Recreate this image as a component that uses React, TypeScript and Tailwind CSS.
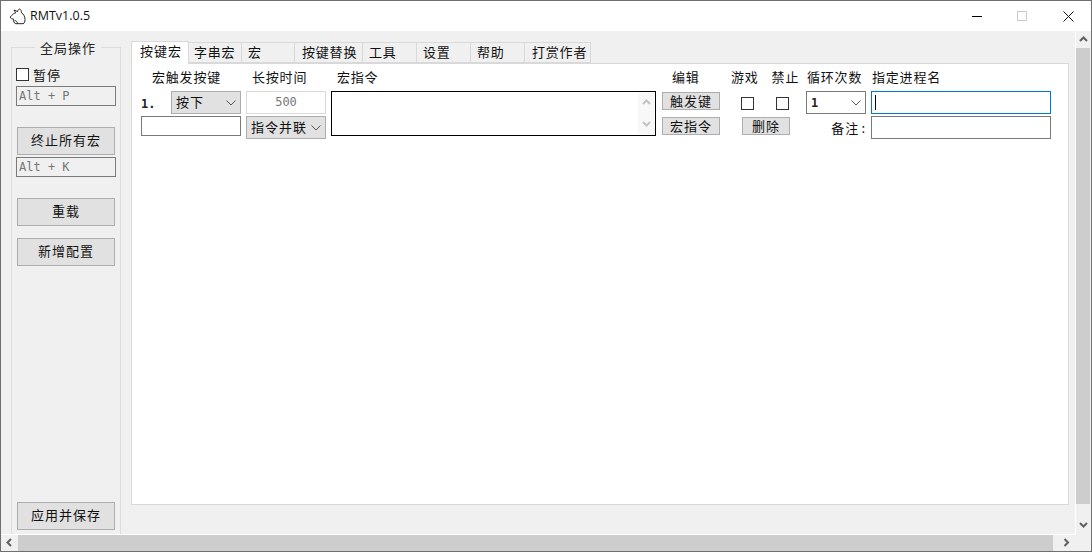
import type { ReactNode } from "react"

const tabs = [
  { label: "按键宏", w: "w-[58px]", pl: "pl-[8px]" },
  { label: "字串宏", w: "w-[54px]", pl: "pl-[5px]" },
  { label: "宏", w: "w-[54px]", pl: "pl-[6px]" },
  { label: "按键替换", w: "w-[69px]", pl: "pl-[7px]" },
  { label: "工具", w: "w-[55px]", pl: "pl-[6px]" },
  { label: "设置", w: "w-[55px]", pl: "pl-[6px]" },
  { label: "帮助", w: "w-[55px]", pl: "pl-[6px]" },
  { label: "打赏作者", w: "w-[67px]", pl: "pl-[7px]" },
]

function Chevron() {
  return (
    <svg width="10" height="6" viewBox="0 0 10 6" fill="none" stroke="#555">
      <path d="M0.5 0.5L5 5L9.5 0.5" />
    </svg>
  )
}

function Arrow({ dir, color = "#606060" }: { dir: "up" | "down" | "left" | "right"; color?: string }) {
  const d = {
    up: "M1 6L4.5 2.5L8 6",
    down: "M1 2L4.5 5.5L8 2",
    left: "M6 1L2.5 4.5L6 8",
    right: "M2.5 1L6 4.5L2.5 8",
  }[dir]
  return (
    <svg width="9" height="9" viewBox="0 0 9 9" fill="none" stroke={color} strokeWidth="2">
      <path d={d} />
    </svg>
  )
}

function Btn({ children, className = "" }: { children: ReactNode; className?: string }) {
  return (
    <button className={`flex items-center justify-center border border-[#adadad] bg-[#e1e1e1] text-[13px] tracking-[1px] text-[#111] ${className}`}>
      {children}
    </button>
  )
}

function Select({ children, className = "" }: { children: ReactNode; className?: string }) {
  return (
    <div className={`flex items-center justify-between border border-[#adadad] bg-[#e1e1e1] pr-[4px] pl-[4px] text-[13px] tracking-[1px] text-[#111] ${className}`}>
      <span className="mb-[2px]">{children}</span>
      <Chevron />
    </div>
  )
}

function Label({ children, className = "" }: { children: ReactNode; className?: string }) {
  return <div className={`h-[27px] pt-[4px] text-[13px] leading-[18px] tracking-[0.8px] whitespace-nowrap text-[#111] ${className}`}>{children}</div>
}

function HotkeyBox({ text }: { text: string }) {
  return (
    <div className="flex h-[20px] w-[100px] items-center border border-[#7a7a7a] bg-[#f0f0f0] pl-[2px] font-['DejaVu_Sans_Mono',monospace] text-[12px] text-[#777]">
      {text}
    </div>
  )
}

function Check({ className = "" }: { className?: string }) {
  return <div className={`h-[13px] w-[13px] border border-[#333] bg-white ${className}`} />
}

export default function App() {
  return (
    <div className="flex h-[552px] w-[1092px] flex-col overflow-hidden border border-[#6f6f6f] bg-[#f0f0f0] font-['Noto_Sans_CJK_SC','Noto_Sans_CJK_JP',sans-serif]">
      {/* title bar */}
      <div className="flex h-[30px] shrink-0 items-center bg-white">
        <svg width="17" height="17" viewBox="0 0 17 17" fill="none" stroke="#222" strokeWidth="1" className="ml-[8px]">
          <path d="M8.5 4C7.5 2.8 6.5 2.2 5 2.2C5.3 3.2 6 4 7 4.7C5 5.2 3.5 6.3 2.6 7.6L1.2 9C1.6 10.6 3 11 4.4 11C4.4 13 5 15.5 6.8 15.7L14 15.7C15.6 15.2 16 13.6 16 11.5C16 8.5 14.6 6 12.4 4.8C12.6 3 12 1.4 10.4 1C9.2 1.6 8.7 2.8 8.5 4Z" />
          <path d="M5.6 12.6C7.2 12.6 8.2 13.6 8.6 15.6" />
        </svg>
        <span className="ml-[4px] font-['Open_Sans',sans-serif] text-[12.5px] text-[#111]">RMTv1.0.5</span>
        <div className="ml-auto flex items-center">
          <div className="h-px w-[10px] bg-black" />
          <div className="ml-[35px] h-[10px] w-[10px] border border-[#ccc]" />
          <svg width="11" height="11" viewBox="0 0 11 11" stroke="#111" className="mr-[17px] ml-[36px]">
            <path d="M0.5 0.5L10.5 10.5M10.5 0.5L0.5 10.5" />
          </svg>
        </div>
      </div>

      <div className="flex min-h-0 flex-1">
        <div className="flex min-w-0 flex-1 overflow-hidden pt-[10px]">
          {/* left group */}
          <fieldset className="ml-[10px] flex h-[520px] w-[110px] shrink-0 flex-col border-x border-t border-[#dcdcdc] pl-[4px]">
            <legend className="mx-auto px-[5px] text-[13px] leading-[13px] tracking-[1px] text-[#222]">全局操作</legend>
            <div className="mt-[12px] flex h-[17px] items-center text-[13px] tracking-[1px] text-[#111]">
              <Check />
              <span className="ml-[4px]">暂停</span>
            </div>
            <div className="mt-[3px]"><HotkeyBox text="Alt + P" /></div>
            <Btn className="mt-[21px] ml-px h-[28px] w-[98px] pb-[2px]">终止所有宏</Btn>
            <div className="mt-[2px]"><HotkeyBox text="Alt + K" /></div>
            <Btn className="mt-[21px] ml-px h-[28px] w-[98px] pb-[2px]">重载</Btn>
            <Btn className="mt-[12px] ml-px h-[28px] w-[98px] pb-[2px]">新增配置</Btn>
            <Btn className="mt-[236px] ml-px h-[28px] w-[98px] pb-[2px]">应用并保存</Btn>
          </fieldset>

          {/* tabs */}
          <div className="ml-[10px] flex w-[938px] shrink-0 flex-col">
            <div className="flex h-[22px] items-end">
              {tabs.map((t, i) => (
                <div
                  key={t.label}
                  className={
                    i === 0
                      ? `z-10 mb-[-1px] h-[23px] border-x border-t border-[#d9d9d9] bg-white text-[13px] leading-[17px] tracking-[1px] text-[#111] ${t.w} ${t.pl}`
                      : `ml-[-1px] h-[21px] border border-[#d9d9d9] bg-[#f0f0f0] text-[13px] leading-[18px] tracking-[0.8px] whitespace-nowrap text-[#111] ${t.w} ${t.pl}`
                  }
                >
                  {t.label}
                </div>
              ))}
            </div>
            <div className="flex h-[442px] border border-[#d9d9d9] bg-white pl-[9px]">
              {/* trigger key */}
              <div className="w-[100px]">
                <Label className="pl-[11px]">宏触发按键</Label>
                <div className="flex items-center">
                  <span className="w-[30px] pt-[2px] font-['DejaVu_Sans_Mono',monospace] text-[12px] font-bold text-[#222]">1.</span>
                  <Select className="h-[23px] w-[70px]">按下</Select>
                </div>
                <div className="mt-[2px] h-[20px] w-[100px] border border-[#7a7a7a] bg-white" />
              </div>
              {/* hold time */}
              <div className="ml-[5px] w-[80px]">
                <Label className="pl-[6px]">长按时间</Label>
                <div className="flex h-[23px] items-center justify-center border border-[#d9d9d9] bg-white pb-px font-['DejaVu_Sans_Mono',monospace] text-[12px] text-[#777]">500</div>
                <Select className="mt-[2px] h-[23px]">指令并联</Select>
              </div>
              {/* macro command */}
              <div className="ml-[5px] w-[325px]">
                <Label className="pl-[6px]">宏指令</Label>
                <div className="flex h-[45px] justify-end border border-black bg-white p-px">
                  <div className="flex w-[16px] flex-col items-center justify-between bg-[#f8f8f8] py-[5px]">
                    <Arrow dir="up" color="#c4c4c4" />
                    <Arrow dir="down" color="#c4c4c4" />
                  </div>
                </div>
              </div>
              {/* edit */}
              <div className="ml-[6px] w-[58px]">
                <Label className="pl-[10px]">编辑</Label>
                <Btn className="mt-[1px] h-[18px] w-[58px]">触发键</Btn>
                <Btn className="mt-[7px] h-[18px] w-[58px]">宏指令</Btn>
              </div>
              {/* game / disable */}
              <div className="ml-[11px] w-[70px]">
                <div className="flex">
                  <Label>游戏</Label>
                  <Label className="ml-[13px]">禁止</Label>
                </div>
                <div className="mt-[6px] flex h-[13px]">
                  <Check className="ml-[10px]" />
                  <Check className="ml-[22px]" />
                </div>
                <Btn className="mt-[7px] ml-[11px] h-[18px] w-[48px]">删除</Btn>
              </div>
              {/* loop count */}
              <div className="ml-[5px] w-[60px]">
                <Label className="pl-px">循环次数</Label>
                <div className="flex h-[23px] items-center justify-between border border-[#7a7a7a] bg-white pr-[4px] pl-[4px] font-['DejaVu_Sans_Mono',monospace] text-[12px] font-bold text-[#222]">
                  <span>1</span>
                  <Chevron />
                </div>
                <div className="mt-[2px] flex h-[23px] items-center justify-end text-[13px] tracking-[1px] whitespace-nowrap text-[#111]">
                  备注<span className="ml-[2px]">:</span>
                </div>
              </div>
              {/* process name */}
              <div className="ml-[5px] w-[180px]">
                <Label className="pl-px">指定进程名</Label>
                <div className="flex h-[23px] items-center border border-[#0078d7] bg-white pl-[3px]">
                  <div className="h-[15px] w-px bg-black" />
                </div>
                <div className="mt-[2px] h-[23px] border border-[#7a7a7a] bg-white" />
              </div>
            </div>
          </div>
        </div>

        {/* vertical scrollbar */}
        <div className="flex w-[16px] shrink-0 flex-col border-l border-white">
          <div className="flex h-[17px] items-center justify-center pr-px"><Arrow dir="up" /></div>
          <div className="mr-px h-[456px] bg-[#cdcdcd]" />
          <div className="flex flex-1 items-center justify-center pt-[12px] pr-px"><Arrow dir="down" /></div>
        </div>
      </div>

      {/* horizontal scrollbar */}
      <div className="relative flex h-[17px] shrink-0">
        <div className="flex w-[17px] items-center justify-center"><Arrow dir="left" /></div>
        <div className="mt-px w-[1035px] bg-[#cdcdcd]" />
        <div className="flex w-[26px] items-center justify-center"><Arrow dir="right" /></div>
        <div className="absolute top-0 left-0 h-px w-[1075px] bg-white" />
      </div>
    </div>
  )
}
